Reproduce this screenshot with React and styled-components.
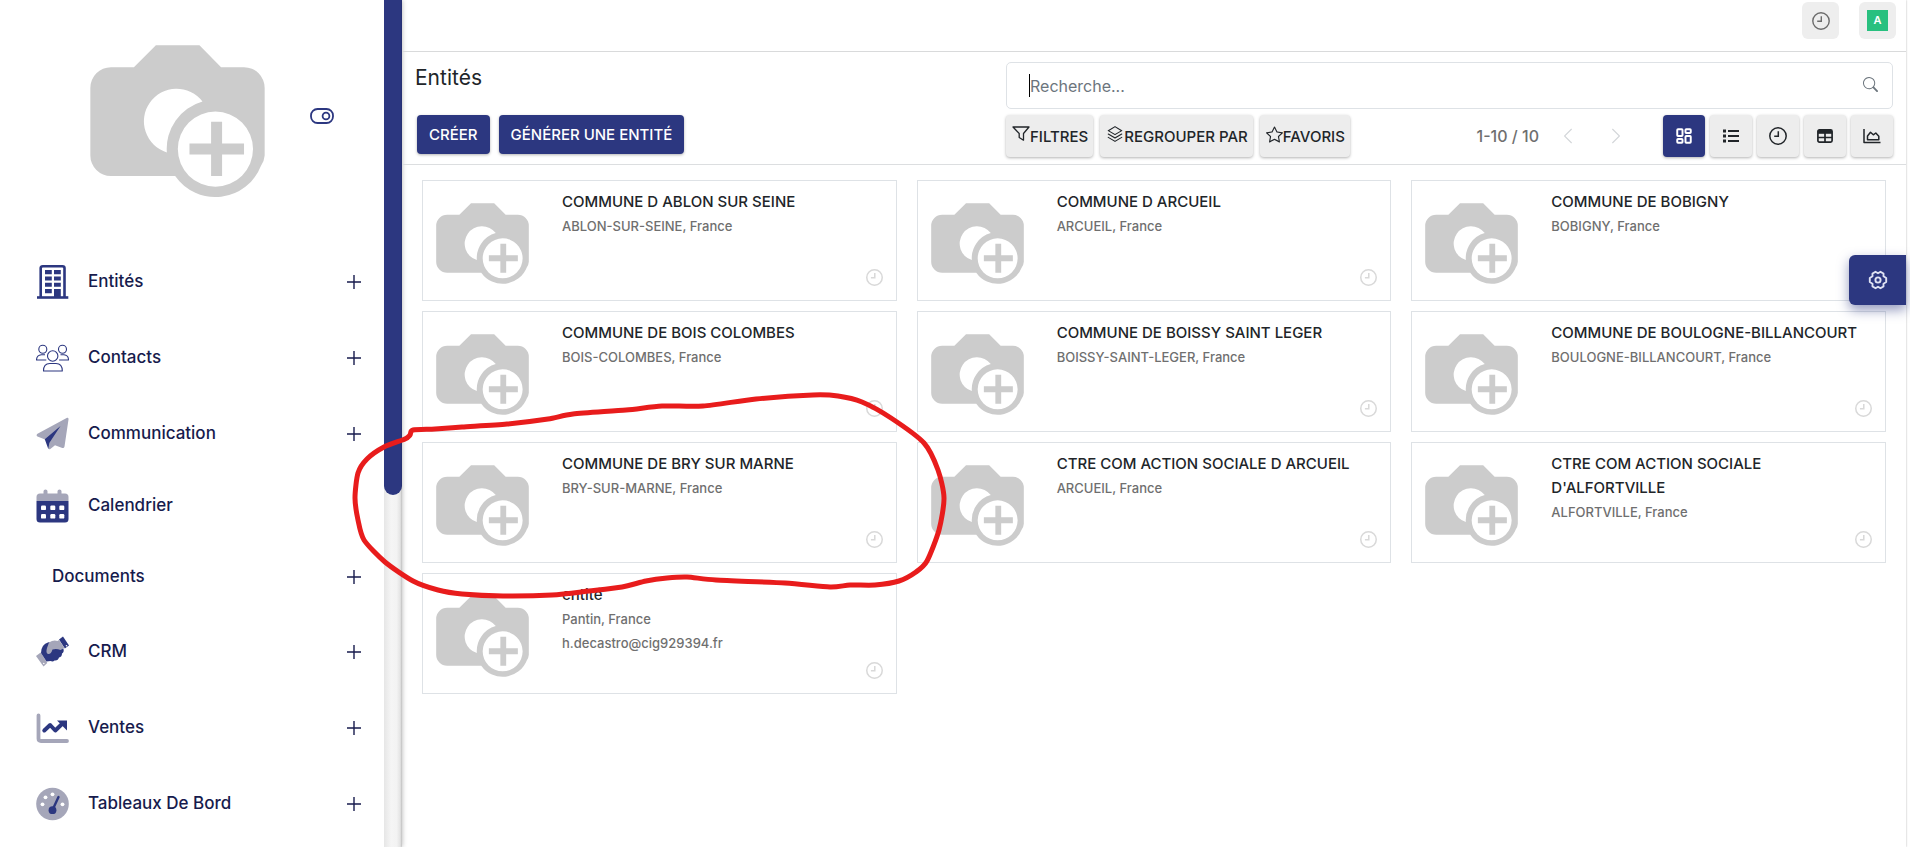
import React from "react";
import styled, { createGlobalStyle, css } from "styled-components";
import { BsSearch, BsChevronLeft, BsChevronRight, BsStar } from "react-icons/bs";
import { PiStack } from "react-icons/pi";
import { LayoutDashboard } from "lucide-react";

const navy = "#2c3780";
const muted = "#a5a6b9";
const line = "#dee2e6";

const GlobalStyle = createGlobalStyle`
  *, *::before, *::after { box-sizing: border-box; }
  html, body { height: 100%; }
  body {
    margin: 0;
    overflow: hidden;
    background: #fff;
    color: #212529;
    font-family: Inter, "Liberation Sans", sans-serif;
    font-weight: 500;
  }
  button, input { font: inherit; color: inherit; }
  svg { display: block; flex: none; }
`;

const Page = styled.div`
  position: relative;
  display: flex;
  height: 100vh;
  overflow: hidden;
`;

/* ---------- Sidebar ---------- */

const Sidebar = styled.aside`
  flex: none;
  display: flex;
  width: 402px;
  box-shadow: 0 0 5px rgba(0, 0, 0, 0.3);
`;

const SidebarBody = styled.div`
  flex: 1;
  min-width: 0;
  overflow: hidden;
`;

const ScrollTrack = styled.div`
  flex: none;
  width: 18px;
  background: linear-gradient(90deg, #e6e6e6, #f5f5f5 40%, #f3f3f3 70%, #dcdcdc);
`;

const ScrollThumb = styled.div`
  height: 495px;
  border-radius: 0 0 9px 9px;
  background: ${navy};
`;

const Brand = styled.div`
  display: flex;
  align-items: center;
  justify-content: space-between;
  height: 244px;
  padding: 0 50px 0 90px;
`;

const ToggleSlot = styled.div`
  padding-bottom: 12px;
`;

const IconButton = styled.button`
  display: flex;
  padding: 0;
  border: 0;
  background: none;
  color: ${(p) => p.$color || "inherit"};
  cursor: pointer;
`;

const NavList = styled.ul`
  margin: 0;
  padding: 0;
  list-style: none;
`;

const NavItem = styled.li`
  display: flex;
  align-items: center;
  height: ${(p) => (p.$leaf ? 68 : p.$plain ? 74 : 76)}px;
  padding: 0 23px 0 ${(p) => (p.$plain ? 52 : 36)}px;
`;

const NavLink = styled.a`
  flex: 1;
  display: flex;
  align-items: center;
  gap: 19px;
  color: #171b4d;
  font-size: 17px;
  line-height: 28px;
  text-decoration: none;

  span { padding-bottom: 3px; }
`;

/* ---------- Main column ---------- */

const Main = styled.main`
  flex: 1;
  display: flex;
  flex-direction: column;
  min-width: 0;
  margin-right: 4px;
  box-shadow: 0 0 2px rgba(0, 0, 0, 0.3);
`;

const TopBar = styled.header`
  display: flex;
  justify-content: flex-end;
  gap: 20px;
  height: 52px;
  padding: 2px 10px 0 0;
  border-bottom: 1px solid #d9dadb;
`;

const TopButton = styled.button`
  display: grid;
  place-items: center;
  width: 37px;
  height: 37px;
  padding: 0;
  border: 0;
  border-radius: 6px;
  background: #eee;
  color: #6c6c6c;
`;

const Avatar = styled.span`
  width: 21px;
  background: #28c07f;
  color: #fff;
  font-size: 11px;
  font-weight: 600;
  line-height: 21px;
  text-align: center;
`;

const ControlPanel = styled.section`
  display: grid;
  grid-template-columns: 591fr 887fr;
  row-gap: 6px;
  height: 113px;
  padding: 10px 13px 7px 13px;
  border-bottom: 1px solid #dcdee0;
`;

const Title = styled.h1`
  margin: 0;
  padding-top: 2px;
  font-size: 21px;
  font-weight: 400;
  line-height: 28px;
`;

const SearchBox = styled.label`
  display: flex;
  align-items: center;
  height: 47px;
  padding: 0 14px 0 22px;
  border: 1px solid ${line};
  border-radius: 5px;
  color: #6c757d;

  svg { margin-bottom: 3px; }
`;

const Caret = styled.span`
  flex: none;
  width: 1px;
  height: 23px;
  background: #000;
`;

const SearchInput = styled.input`
  flex: 1;
  min-width: 0;
  padding: 0;
  border: 0;
  outline: 0;
  background: none;
  font-size: 16px;
  font-weight: 400;

  &::placeholder { color: #6c757d; opacity: 1; }
`;

const Actions = styled.div`
  display: flex;
  align-items: flex-start;
  gap: 9px;
  padding-left: 2px;
`;

const raised = css`
  border: 0;
  border-radius: 4px;
  box-shadow: 0 1px 3px rgba(0, 0, 0, 0.3);
  cursor: pointer;
`;

const PrimaryButton = styled.button`
  ${raised}
  height: 39px;
  padding: 0 12px;
  background: ${navy};
  color: #fff;
  font-size: 15px;
  font-weight: 500;
  white-space: nowrap;
`;

const Tools = styled.div`
  display: flex;
  align-items: flex-start;
  justify-content: space-between;
`;

const ToolGroup = styled.div`
  display: flex;
  align-items: center;
  gap: ${(p) => p.$gap}px;
`;

const FilterButton = styled.button`
  ${raised}
  display: flex;
  align-items: center;
  height: 42px;
  padding: 0 5px 0 6px;
  background: #ededed;
  font-size: 15px;
  white-space: nowrap;

  svg { margin-bottom: 4px; }
`;

const Pager = styled.div`
  display: flex;
  align-items: center;
  gap: 20px;
  color: #6f6f6f;
  font-size: 16px;
`;

const PagerArrows = styled.div`
  display: flex;
  gap: 30px;
`;

const ViewButton = styled.button`
  ${raised}
  display: grid;
  place-items: center;
  width: 42px;
  height: 42px;
  padding: 0;
  background: ${(p) => (p.$active ? navy : "#ededed")};
  color: ${(p) => (p.$active ? "#fff" : "#212529")};
`;

/* ---------- Cards ---------- */

const CardGrid = styled.section`
  display: grid;
  grid-template-columns: repeat(3, minmax(0, 1fr));
  gap: 10px 20px;
  padding: 15px 20px;
`;

const Card = styled.article`
  display: flex;
  min-height: 121px;
  padding: 9px 13px;
  border: 1px solid ${line};
`;

const Thumb = styled.div`
  flex: none;
  width: 126px;
  padding-top: 13px;
`;

const CardText = styled.div`
  flex: 1;
  min-width: 0;
  font-size: 13px;
  line-height: 24px;
  color: #6f6f6f;

  p { margin: 0; }
`;

const CardTitle = styled.h2`
  margin: 0;
  color: #212529;
  font-size: 15px;
  font-weight: 500;
  line-height: 24px;
`;

const CardFoot = styled.div`
  align-self: flex-end;
  width: 17px;
  margin-left: -17px;
  padding-bottom: 5px;
`;

/* ---------- Overlays ---------- */

const SettingsTab = styled.button`
  position: absolute;
  top: 255px;
  right: 4px;
  display: grid;
  place-items: center;
  width: 57px;
  height: 50px;
  padding: 0;
  border: 0;
  border-radius: 6px 0 0 6px;
  background: ${navy};
  color: #dfe2f3;
  box-shadow: 0 5px 12px rgba(44, 55, 128, 0.5);
`;

const Annotation = styled.svg`
  position: absolute;
  top: 0;
  left: 0;
  pointer-events: none;
`;

/* ---------- Drawings ---------- */

const Camera = ({ width }) => (
  <svg width={width} viewBox="270 137 526 461" aria-hidden="true">
    <path
      fill="#ccc"
      fillRule="evenodd"
      d="M333 204H402L468 138H599L664 204H733A62 62 0 0 1 795 266V469Q794 485 784 500A147 147 0 0 1 526 531H333A62 62 0 0 1 271 469V266A62 62 0 0 1 333 204Z
         M608 307A98 98 0 1 0 501 460A147 147 0 0 1 608 307Z
         M534 450A113 113 0 1 0 760 450A113 113 0 1 0 534 450Z"
    />
    <path fill="#ccc" d="M634 368h33v65h66v33h-66v65h-33v-65h-65v-33h65z" />
  </svg>
);

const Clock = ({ size, width = 1.4 }) => (
  <svg width={size} height={size} viewBox="0 0 18 18" fill="none" stroke="currentColor" strokeWidth={width} aria-hidden="true">
    <circle cx="9" cy="9" r="8.2" />
    <path d="M9.3 4.3V9.3H5.2" />
  </svg>
);

const Toggle = () => (
  <svg width="24" height="16" viewBox="0 0 24 16" fill="none" stroke="currentColor" strokeWidth="1.8" aria-hidden="true">
    <rect x="1" y="1" width="22" height="14" rx="6.5" />
    <circle cx="16" cy="8" r="3.4" />
  </svg>
);

const Plus = () => (
  <svg width="14" height="14" viewBox="0 0 14 14" stroke="currentColor" strokeWidth="1.4" aria-hidden="true">
    <path d="M7 0V14M0 7H14" />
  </svg>
);

const Funnel = () => (
  <svg width="18" height="18" viewBox="0 0 18 18" fill="none" stroke="currentColor" strokeWidth="1.3" strokeLinejoin="round" aria-hidden="true">
    <path d="M1 2H17L11.5 8.5V15.2L7.2 12.5V8.5Z" />
  </svg>
);

const ListIcon = () => (
  <svg width="16" height="14" viewBox="0 0 16 14" fill="currentColor" aria-hidden="true">
    <path d="M5 1h11v2H5zM5 6h11v2H5zM5 11h11v2H5z" />
    <path d="M0 .5h3v3H0zM0 5.500h3v3H0zM0 10.500h3v3H0z" />
  </svg>
);

const TableIcon = () => (
  <svg width="16" height="14" viewBox="0 0 16 14" fill="none" stroke="currentColor" strokeWidth="1.700" aria-hidden="true">
    <rect x=".9" y=".9" width="14.200" height="12.200" rx="1.500" />
    <path d="M8 3V13M1 8.500H15" />
    <path fill="currentColor" stroke="none" d="M1 1H15V4.800H1Z" />
  </svg>
);

const AreaIcon = () => (
  <svg width="18" height="16" viewBox="0 0 18 16" fill="none" stroke="currentColor" strokeWidth="1.500" strokeLinejoin="round" aria-hidden="true">
    <path d="M1 1V14.500H17.500" />
    <path d="M4.500 11.800V8L7.500 4.300L10.300 6.800L12.800 5L15.800 8.300V11.800Z" />
  </svg>
);

const Gear = () => (
  <svg width="20" height="20" viewBox="0 0 20 20" fill="none" stroke="currentColor" strokeWidth="1.900" strokeLinejoin="round" aria-hidden="true">
    <path d="M7.500 1.800L10 3.300L12.500 1.800L15.500 3.500V6.300L18.200 8V12L15.500 13.700V16.500L12.500 18.200L10 16.700L7.500 18.200L4.500 16.500V13.700L1.800 12V8L4.500 6.300V3.500Z" />
    <circle cx="10" cy="10" r="2.600" />
  </svg>
);

const NavSvg = ({ children }) => (
  <svg width="33" height="34" viewBox="-.5 0 33 34" fill="none" aria-hidden="true">{children}</svg>
);

const Building = () => (
  <NavSvg>
    <path d="M4.200 32V3Q4.200 1.300 6.200 1.300H26Q28 1.300 28 3V32" stroke={navy} strokeWidth="2.600" />
    <path d="M.5 32.500H31.800" stroke={navy} strokeWidth="2.600" />
    <path
      fill={navy}
      d="M8.500 5h6.800v4.200H8.500zM17.500 5h6.800v4.200h-6.800zM8.500 11.400h6.800v4H8.500zM17.500 11.400h6.800v4h-6.800zM8.500 17.700h6.800v4H8.500zM17.500 17.700h6.800v4h-6.800zM8.500 24h6.800v4.200H8.500zM17.500 24h6.800v8h-6.800z"
    />
  </NavSvg>
);

const People = () => (
  <NavSvg>
    <g stroke={navy} strokeWidth="1.100" strokeLinejoin="round">
      <circle cx="6.300" cy="8.300" r="4" />
      <circle cx="26" cy="8.300" r="4" />
      <circle cx="16.200" cy="15" r="5.200" />
      <path d="M9.800 19H0Q.2 14.200 4.800 13.800H8.500M22.600 19H32Q32 14.200 27.500 13.800H24" />
      <path d="M7 30H25.800Q25.800 22.500 19.500 22.500H13.300Q7 22.500 7 30Z" />
    </g>
  </NavSvg>
);

const Plane = () => (
  <NavSvg>
    <path fill={muted} d="M30.600.8Q32.200.5 32 2.400L28 29.500Q27.600 31.400 25.800 30.900L18.500 28.200L13.500 32.200Q12 32.800 11.800 31L11 25L8.500 22.500L1 19.500Q-.8 18.200 1 16.800Z" />
    <path fill={navy} d="M24 9L8.300 22.300L11.800 32L12.800 26Z" />
  </NavSvg>
);

const CalendarIcon = () => (
  <NavSvg>
    <path fill={muted} d="M0 12V8Q0 4.500 3.500 4.500H7V2.200Q7 .5 9 .5T11 2.200V4.500H21V2.200Q21 .5 23 .5T25 2.200V4.500H28.500Q32 4.500 32 8V12Z" />
    <path fill={navy} d="M0 12H32V30Q32 33.500 28.500 33.500H3.500Q0 33.500 0 30Z" />
    <g fill="#fff">
      {[4.5, 13.800, 22.800].map((x) =>
        [16.500, 25].map((y) => <rect key={`${x}-${y}`} x={x} y={y} width="5" height="4.600" rx="1.200" />)
      )}
    </g>
  </NavSvg>
);

const Handshake = () => (
  <NavSvg>
    <path fill={muted} d="M-.5 21L4.200 17.500L10.800 28L7 31.500Z" />
    <path fill={navy} d="M22.500 4.500L26.500 1.500L32.500 10.500L28.300 13.500Z" />
    <path fill={navy} d="M4.500 18Q4.500 9.500 12 7.200L24 9L27 14Q27.800 17 25.500 18.500Q25.500 22 22.500 22.500Q21.500 26 18 25.500Q16.500 27 14 26L10 26.500Z" />
    <path fill={muted} d="M12.500 7.500Q17 4.500 21 6L22.500 5L28 13L24 15Q20 13.500 16 14.500Q14.500 19.500 11.500 19Q9 18 10.500 13Z" />
    <circle cx="30" cy="10.800" r=".8" fill="#fff" />
    <circle cx="7.300" cy="28.500" r=".8" fill="#fff" />
  </NavSvg>
);

const Sales = () => (
  <NavSvg>
    <path d="M2 4.500V27.500Q2 30 4.500 30H30.500" stroke={muted} strokeWidth="3.800" strokeLinecap="round" />
    <path d="M7.800 19.500L13.600 14L18.800 19.500L26.500 12" stroke={navy} strokeWidth="4" strokeLinejoin="round" strokeLinecap="round" />
    <path fill={navy} d="M20.500 9.500H30.500V19.500Z" />
  </NavSvg>
);

const Gauge = () => (
  <NavSvg>
    <circle cx="16" cy="17" r="16.300" fill={muted} />
    <path d="M16 23L22 10" stroke={navy} strokeWidth="2.400" strokeLinecap="round" />
    <circle cx="16" cy="23.200" r="3.900" fill={navy} />
    <g fill="#fff">
      <circle cx="6" cy="17.300" r="1.900" />
      <circle cx="9" cy="10.300" r="1.900" />
      <circle cx="16" cy="7.300" r="1.900" />
      <circle cx="26" cy="17.300" r="1.900" />
    </g>
  </NavSvg>
);

const loop = [
  [413, 430], [435, 429], [462, 427], [507, 424], [548, 419], [573, 414], [626, 410], [662, 406], [703, 406],
  [756, 399], [813, 395], [838, 396], [862, 402], [891, 418], [924, 443], [938, 470], [944, 498],
  [939, 530], [927, 561], [916, 572], [899, 581], [875, 585], [850, 585], [830, 587], [785, 583],
  [716, 580], [687, 577], [667, 578], [646, 581], [622, 587], [589, 591], [552, 595], [503, 596],
  [462, 594], [438, 590], [413, 581], [385, 562], [364, 540], [358, 520], [355, 498], [358, 473],
  [367, 459], [384, 447], [405, 439], [410, 435],
];

/* Closed Catmull-Rom curve through the points, as cubic Béziers. */
const smooth = (pts) => {
  const at = (i) => pts[(i + pts.length) % pts.length];
  return pts.reduce((d, p, i) => {
    const [a, c, e] = [at(i - 1), at(i + 1), at(i + 2)];
    const c1 = [p[0] + (c[0] - a[0]) / 8, p[1] + (c[1] - a[1]) / 8];
    const c2 = [c[0] - (e[0] - p[0]) / 8, c[1] - (e[1] - p[1]) / 8];
    return `${d}C${c1} ${c2} ${c}`;
  }, `M${pts[0]}`);
};

/* ---------- Data ---------- */

const nav = [
  { label: "Entités", Icon: Building },
  { label: "Contacts", Icon: People },
  { label: "Communication", Icon: Plane },
  { label: "Calendrier", Icon: CalendarIcon, leaf: true },
  { label: "Documents" },
  { label: "CRM", Icon: Handshake },
  { label: "Ventes", Icon: Sales },
  { label: "Tableaux De Bord", Icon: Gauge },
];

const entities = [
  ["COMMUNE D ABLON SUR SEINE", "ABLON-SUR-SEINE, France"],
  ["COMMUNE D ARCUEIL", "ARCUEIL, France"],
  ["COMMUNE DE BOBIGNY", "BOBIGNY, France"],
  ["COMMUNE DE BOIS COLOMBES", "BOIS-COLOMBES, France"],
  ["COMMUNE DE BOISSY SAINT LEGER", "BOISSY-SAINT-LEGER, France"],
  ["COMMUNE DE BOULOGNE-BILLANCOURT", "BOULOGNE-BILLANCOURT, France"],
  ["COMMUNE DE BRY SUR MARNE", "BRY-SUR-MARNE, France"],
  ["CTRE COM ACTION SOCIALE D ARCUEIL", "ARCUEIL, France"],
  ["CTRE COM ACTION SOCIALE D'ALFORTVILLE", "ALFORTVILLE, France"],
  ["entité", "Pantin, France", "h.decastro@cig929394.fr"],
];

const views = [
  { label: "Kanban", icon: <LayoutDashboard size={18} strokeWidth={2.6} />, active: true },
  { label: "Liste", icon: <ListIcon /> },
  { label: "Activité", icon: <Clock size={18} width={1.5} /> },
  { label: "Tableau", icon: <TableIcon /> },
  { label: "Graphique", icon: <AreaIcon /> },
];

export default function App() {
  return (
    <Page>
      <GlobalStyle />
      <Sidebar>
        <SidebarBody>
          <Brand>
            <Camera width={175} />
            <ToggleSlot>
              <IconButton $color={navy} aria-label="Réduire le menu"><Toggle /></IconButton>
            </ToggleSlot>
          </Brand>
          <nav>
            <NavList>
              {nav.map(({ label, Icon, leaf }) => (
                <NavItem key={label} $leaf={leaf} $plain={!Icon}>
                  <NavLink href="#">
                    {Icon && <Icon />}
                    <span>{label}</span>
                  </NavLink>
                  {!leaf && <IconButton $color="#171b4d" aria-label={`Ouvrir ${label}`}><Plus /></IconButton>}
                </NavItem>
              ))}
            </NavList>
          </nav>
        </SidebarBody>
        <ScrollTrack><ScrollThumb /></ScrollTrack>
      </Sidebar>

      <Main>
        <TopBar>
          <TopButton aria-label="Activités"><Clock size={18} /></TopButton>
          <TopButton aria-label="Compte"><Avatar>A</Avatar></TopButton>
        </TopBar>

        <ControlPanel>
          <Title>Entités</Title>
          <SearchBox>
            <Caret />
            <SearchInput type="text" placeholder="Recherche..." aria-label="Recherche" />
            <BsSearch size={15} />
          </SearchBox>
          <Actions>
            <PrimaryButton>CRÉER</PrimaryButton>
            <PrimaryButton>GÉNÉRER UNE ENTITÉ</PrimaryButton>
          </Actions>
          <Tools>
            <ToolGroup $gap={7}>
              <FilterButton><Funnel />FILTRES</FilterButton>
              <FilterButton><PiStack size={18} />REGROUPER PAR</FilterButton>
              <FilterButton><BsStar size={17} />FAVORIS</FilterButton>
            </ToolGroup>
            <ToolGroup $gap={38}>
              <Pager>
                <span>1-10 / 10</span>
                <PagerArrows>
                  <IconButton $color="#d3d6d9" aria-label="Précédent"><BsChevronLeft size={18} /></IconButton>
                  <IconButton $color="#d3d6d9" aria-label="Suivant"><BsChevronRight size={18} /></IconButton>
                </PagerArrows>
              </Pager>
              <ToolGroup $gap={5}>
                {views.map((v) => (
                  <ViewButton key={v.label} $active={v.active} aria-label={v.label}>{v.icon}</ViewButton>
                ))}
              </ToolGroup>
            </ToolGroup>
          </Tools>
        </ControlPanel>

        <CardGrid>
          {entities.map(([name, ...lines]) => (
            <Card key={name}>
              <Thumb><Camera width={93} /></Thumb>
              <CardText>
                <CardTitle>{name}</CardTitle>
                {lines.map((l) => <p key={l}>{l}</p>)}
              </CardText>
              <CardFoot>
                <IconButton $color="#d9d9d9" aria-label="Activités"><Clock size={17} width={1.6} /></IconButton>
              </CardFoot>
            </Card>
          ))}
        </CardGrid>
      </Main>

      <SettingsTab aria-label="Paramètres"><Gear /></SettingsTab>
      <Annotation width="1000" height="640" aria-hidden="true">
        <path d={smooth(loop)} fill="none" stroke="#e81c1c" strokeWidth="5" strokeLinejoin="round" />
      </Annotation>
    </Page>
  );
}
